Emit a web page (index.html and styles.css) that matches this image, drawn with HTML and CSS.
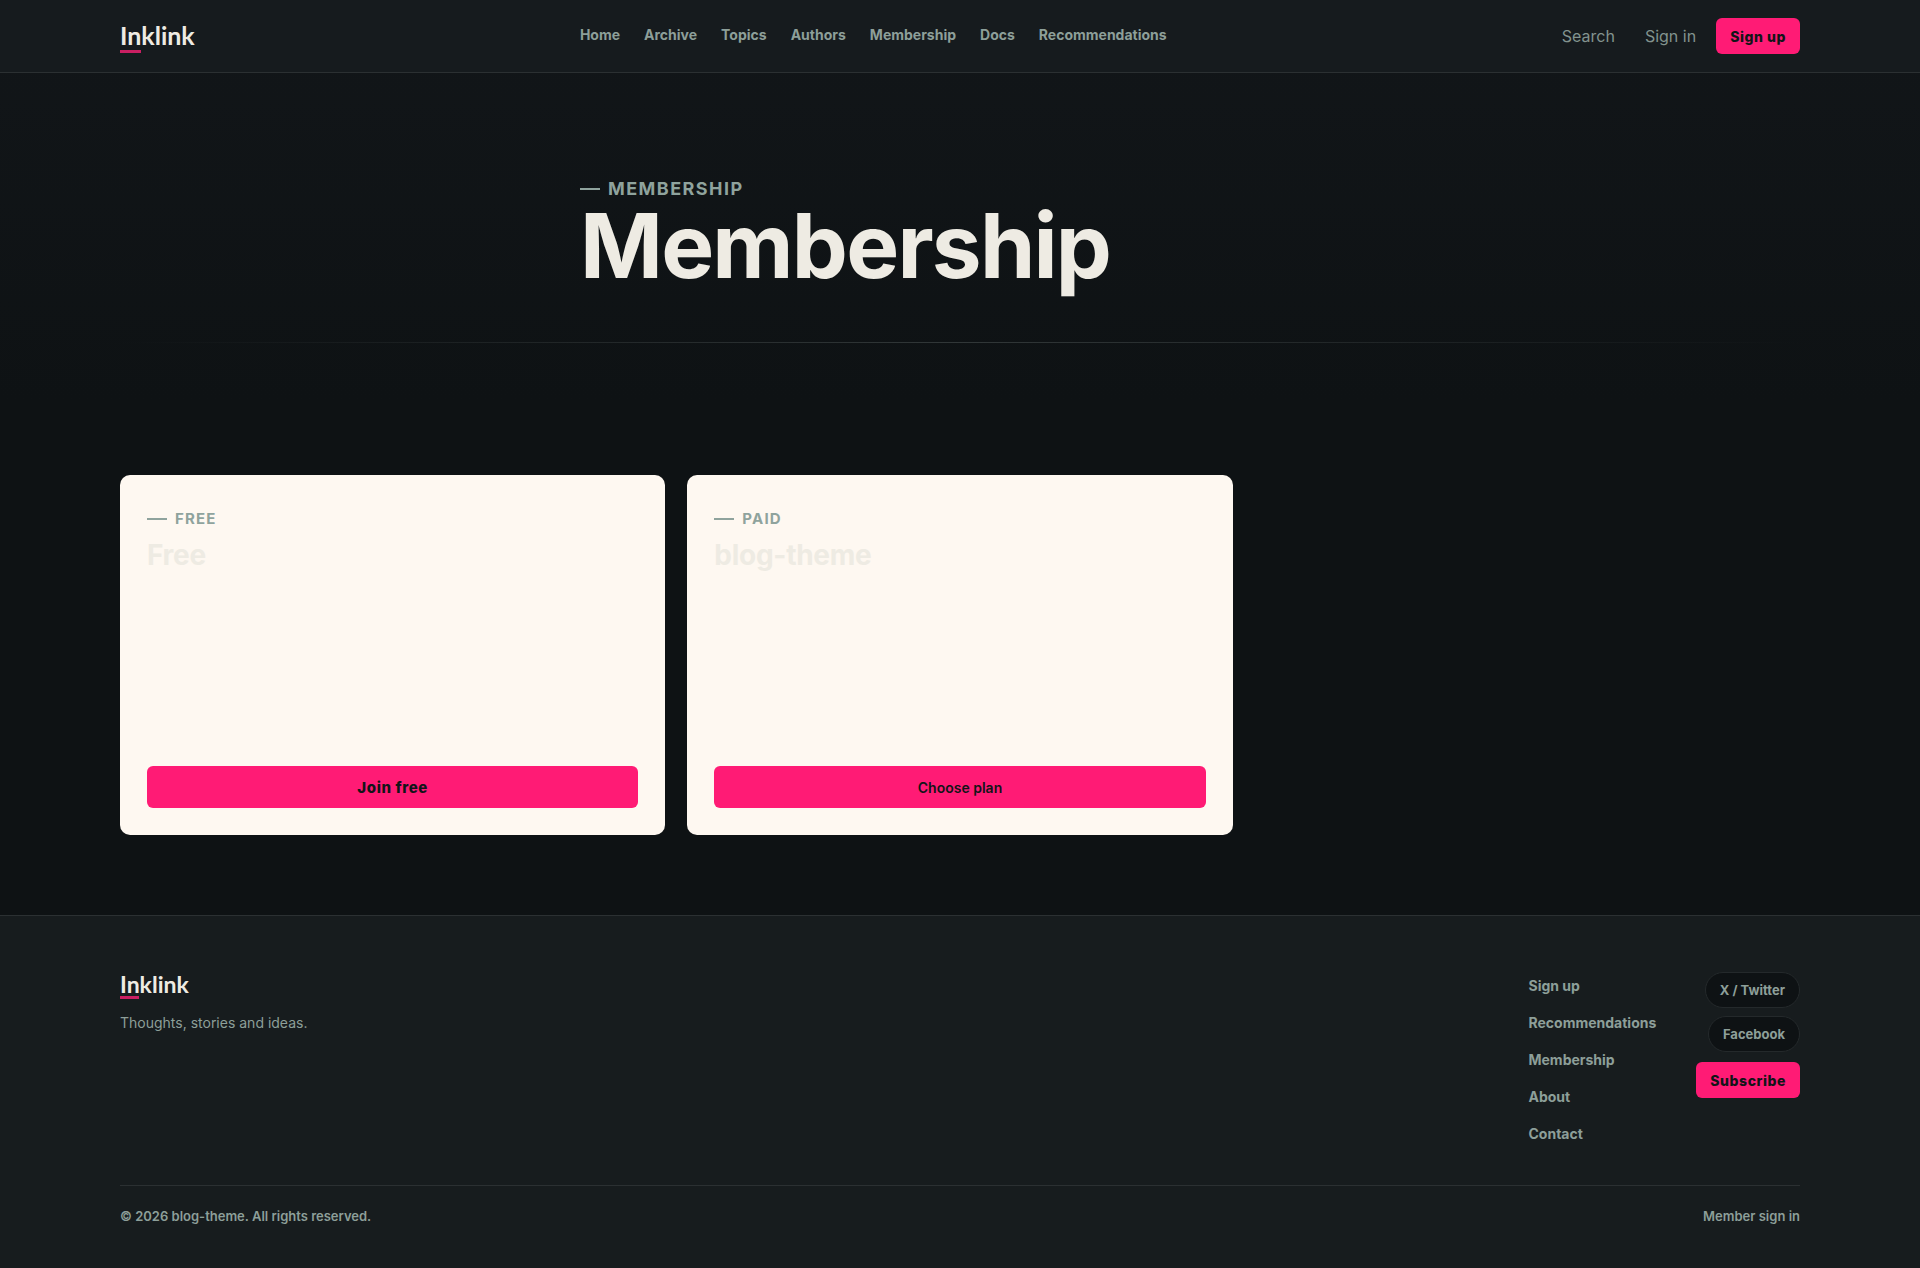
FILE: index.html
```html
<!DOCTYPE html>
<html lang="en">
<head>
    <meta charset="UTF-8">
    <meta name="viewport" content="width=device-width, initial-scale=1.0">
    <title>Membership</title>
    <link rel="stylesheet" href="styles.css">
</head>

<body>
    <header class="site-header">
        <div class="container header-inner">
            <a class="logo" href="#">Inklink</a>
            <nav class="main-nav">
                <a href="#">Home</a>
                <a href="#">Archive</a>
                <a href="#">Topics</a>
                <a href="#">Authors</a>
                <a href="#">Membership</a>
                <a href="#">Docs</a>
                <a href="#">Recommendations</a>
            </nav>
            <div class="header-actions">
                <button type="button" class="text-button">Search</button>
                <a class="text-button" href="#">Sign in</a>
                <a class="button" href="#">Sign up</a>
            </div>
        </div>
    </header>

    <main>
        <section class="hero">
            <div class="hero-inner">
                <p class="eyebrow eyebrow-large">Membership</p>
                <h1>Membership</h1>
            </div>
            <hr class="divider">
        </section>

        <section class="container plans">
            <article class="plan">
                <p class="eyebrow">Free</p>
                <h2>Free</h2>
                <a class="button plan-button" href="#">Join free</a>
            </article>
            <article class="plan">
                <p class="eyebrow">Paid</p>
                <h2>blog-theme</h2>
                <button type="button" class="button plan-button plan-choose">Choose plan</button>
            </article>
        </section>
    </main>

    <footer class="site-footer">
        <div class="container">
            <div class="footer-top">
                <div class="footer-brand">
                    <a class="logo logo-small" href="#">Inklink</a>
                    <p>Thoughts, stories and ideas.</p>
                </div>
                <nav class="footer-nav">
                    <a href="#">Sign up</a>
                    <a href="#">Recommendations</a>
                    <a href="#">Membership</a>
                    <a href="#">About</a>
                    <a href="#">Contact</a>
                </nav>
                <div class="footer-social">
                    <a class="pill" href="#">X / Twitter</a>
                    <a class="pill" href="#">Facebook</a>
                    <a class="button" href="#">Subscribe</a>
                </div>
            </div>
            <div class="footer-bottom">
                <span>© 2026 blog-theme. All rights reserved.</span>
                <a href="#">Member sign in</a>
            </div>
        </div>
    </footer>
</body>

</html>
```

FILE: styles.css
```css
* {
    box-sizing: border-box;
}

body {
    font-family: Inter, "Liberation Sans", sans-serif;
    background: linear-gradient(#121619, #0e1214 400px);
    background-color: #0e1214;
    color: #eeebe3;
    display: flex;
    flex-direction: column;
    min-height: 100vh;
    margin: 0;
}

a {
    color: inherit;
    text-decoration: none;
}

h1,
h2,
p {
    margin: 0;
}

main {
    flex: 1;
}

.container {
    width: 87.5%;
    margin: 0 auto;
}

/* Header */
.site-header {
    background: #161b1e;
    border-bottom: 1px solid #2b3032;
}

.header-inner {
    display: flex;
    justify-content: space-between;
    align-items: center;
    height: 72px;
}

.logo {
    font-family: Lato, Inter, sans-serif;
    font-size: 25px;
    font-weight: 700;
    line-height: 30px;
}

.logo::after {
    content: "";
    display: block;
    width: 28%;
    height: 3px;
    background: #c91f62;
}

.main-nav {
    display: flex;
    gap: 24px;
    padding-bottom: 3px;
    color: #8d9f99;
    font-size: 14px;
    font-weight: 700;
}

.header-actions {
    display: flex;
    align-items: center;
    gap: 10px;
}

.text-button {
    background: none;
    border: none;
    padding: 0 10px;
    color: #82938e;
    font-family: inherit;
    font-size: 16px;
    cursor: pointer;
}

.button {
    display: flex;
    align-items: center;
    justify-content: center;
    height: 36px;
    padding: 0 14px;
    background: #ff1b75;
    border: none;
    border-radius: 6px;
    color: #111518;
    font-family: inherit;
    font-size: 14px;
    font-weight: 800;
    letter-spacing: 0.04em;
    cursor: pointer;
}

/* Hero */
.hero {
    padding-top: 104px;
}

.hero-inner {
    width: 760px;
    max-width: 87.5%;
    margin: 0 auto;
}

.eyebrow {
    display: flex;
    align-items: center;
    gap: 8px;
    color: #8fa39d;
    font-size: 15px;
    font-weight: 700;
    line-height: 24px;
    letter-spacing: 0.08em;
    text-transform: uppercase;
}

.eyebrow::before {
    content: "";
    width: 20px;
    height: 2px;
    background: #8fa39d;
}

.eyebrow-large {
    font-size: 18px;
}

h1 {
    font-size: 89px;
    font-weight: 700;
    line-height: 90px;
    letter-spacing: -0.02em;
}

.divider {
    height: 1px;
    margin: 51px 120px 0;
    border: none;
    background: linear-gradient(90deg, transparent, #313738 50%, transparent);
}

/* Plans */
.plans {
    display: grid;
    grid-template-columns: repeat(3, 1fr);
    gap: 22px;
    padding: 132px 0 80px;
}

.plan {
    display: flex;
    flex-direction: column;
    min-height: 360px;
    padding: 32px 27px 27px;
    background: #fef8f1;
    border-radius: 10px;
}

.plan h2 {
    margin-top: 6px;
    color: #eeebe3;
    font-size: 28px;
    font-weight: 700;
    line-height: 36px;
    letter-spacing: -0.01em;
}

.plan-button {
    width: 100%;
    height: 42px;
    margin-top: auto;
    font-size: 15px;
}

.plan-choose {
    font-size: 14px;
    font-weight: 600;
    letter-spacing: normal;
}

/* Footer */
.site-footer {
    background: #171c1e;
    border-top: 1px solid #2b3032;
    color: #8d9f99;
    padding-top: 56px;
}

.footer-top {
    display: flex;
    align-items: flex-start;
    gap: 40px;
    padding-bottom: 34px;
}

.footer-brand {
    display: flex;
    flex-direction: column;
    align-items: flex-start;
    gap: 14px;
    margin-right: auto;
    font-size: 14px;
    line-height: 20px;
}

.logo-small {
    color: #eeebe3;
    font-size: 23px;
    line-height: 24px;
}

.footer-nav {
    display: flex;
    flex-direction: column;
    gap: 10px;
    padding-bottom: 4px;
    font-size: 14px;
    font-weight: 700;
    line-height: 27px;
}

.footer-social {
    display: flex;
    flex-direction: column;
    align-items: flex-end;
    gap: 8px;
}

.footer-social .button {
    margin-top: 2px;
}

.pill {
    padding: 8px 14px;
    background: #0e1214;
    border: 1px solid #24292b;
    border-radius: 18px;
    font-size: 13px;
    font-weight: 700;
    line-height: 18px;
}

.footer-bottom {
    display: flex;
    justify-content: space-between;
    padding: 19px 0 41px;
    border-top: 1px solid #2b3032;
    font-size: 13px;
    font-weight: 600;
    line-height: 22px;
}

@media (max-width: 1100px) {
    .main-nav {
        display: none;
    }

    .plans {
        grid-template-columns: 1fr;
    }

    h1 {
        font-size: 56px;
        line-height: 64px;
    }
}
```
